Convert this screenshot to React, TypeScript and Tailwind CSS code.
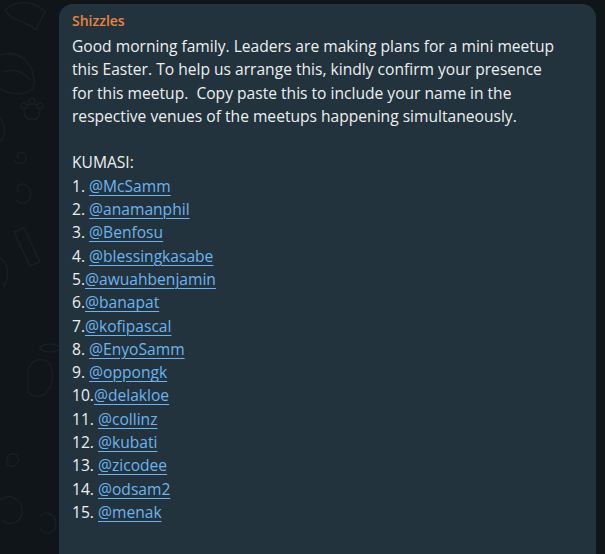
import React from "react";

const links: [string, string][] = [
  ["1. ", "@McSamm"],
  ["2. ", "@anamanphil"],
  ["3. ", "@Benfosu"],
  ["4. ", "@blessingkasabe"],
  ["5.", "@awuahbenjamin"],
  ["6.", "@banapat"],
  ["7.", "@kofipascal"],
  ["8. ", "@EnyoSamm"],
  ["9. ", "@oppongk"],
  ["10.", "@delakloe"],
  ["11. ", "@collinz"],
  ["12. ", "@kubati"],
  ["13. ", "@zicodee"],
  ["14. ", "@odsam2"],
  ["15. ", "@menak"],
];

const para = [
  "Good morning family. Leaders are making plans for a mini meetup",
  "this Easter. To help us arrange this, kindly confirm your presence",
  "for this meetup.  Copy paste this to include your name in the",
  "respective venues of the meetups happening simultaneously.",
];

function Doodles() {
  return (
    <svg
      className="absolute inset-0 h-full w-full"
      viewBox="0 0 605 554"
      fill="none"
      stroke="#181e22"
      strokeWidth="1.6"
      strokeLinecap="round"
      strokeLinejoin="round"
    >
      <path d="M5 10 C15 0 35 0 45 12 L36 30 C25 20 12 22 5 10 Z" />
      <path d="M0 55 C20 48 36 66 34 86 C30 96 10 96 0 88" />
      <path d="M4 72 C14 68 24 72 30 80" />
      <circle cx="32" cy="112" r="8" />
      <circle cx="24" cy="106" r="3" />
      <circle cx="32" cy="101" r="3" />
      <circle cx="40" cy="106" r="3" />
      <path d="M0 118 C6 124 6 136 0 142" />
      <path d="M18 158 C14 152 24 150 26 156 C28 164 16 166 14 160" />
      <path d="M18 192 C14 184 26 180 30 190 C34 200 22 208 16 200" />
      <path d="M14 232 L30 266 L40 262 L24 228 Z" />
      <path d="M0 258 C8 262 10 276 4 286" />
      <ellipse cx="50" cy="348" rx="10" ry="4" />
      <path d="M28 370 C32 356 50 356 52 370 C56 390 40 404 28 392 Z" />
      <path d="M8 462 C4 454 16 450 18 458 C20 466 8 470 6 462" />
      <path d="M0 500 C10 492 24 500 22 514 C20 524 8 526 2 520" />
      <path d="M40 516 C46 510 56 514 56 524 C56 534 44 536 40 528" />
    </svg>
  );
}

export default function App() {
  return (
    <div className="relative h-[554px] w-[605px] overflow-hidden bg-[#0f1519]">
      <Doodles />
      <div className="relative ml-[59px] mt-[4px] h-[600px] w-[537px] rounded-[14px] bg-[#22333d] pl-[13px] pt-[8px] font-['Open_Sans','Noto_Sans',sans-serif] text-[#eceff1]">
        <div className="text-[14px] font-semibold leading-[18px] text-[#e8843b]">Shizzles</div>
        <div className="mt-[5px] text-[15.6px] leading-[23.3px]">
          {para.map((l, i) => (
            <div key={i} className="whitespace-pre">
              {l}
            </div>
          ))}
          <div className="h-[23.3px]" />
          <div>KUMASI:</div>
          {links.map(([n, h], i) => (
            <div key={i} className="whitespace-pre">
              {n}
              <span className="text-[#6cb4f0] underline decoration-[1px] underline-offset-[3px]">{h}</span>
            </div>
          ))}
        </div>
      </div>
    </div>
  );
}
